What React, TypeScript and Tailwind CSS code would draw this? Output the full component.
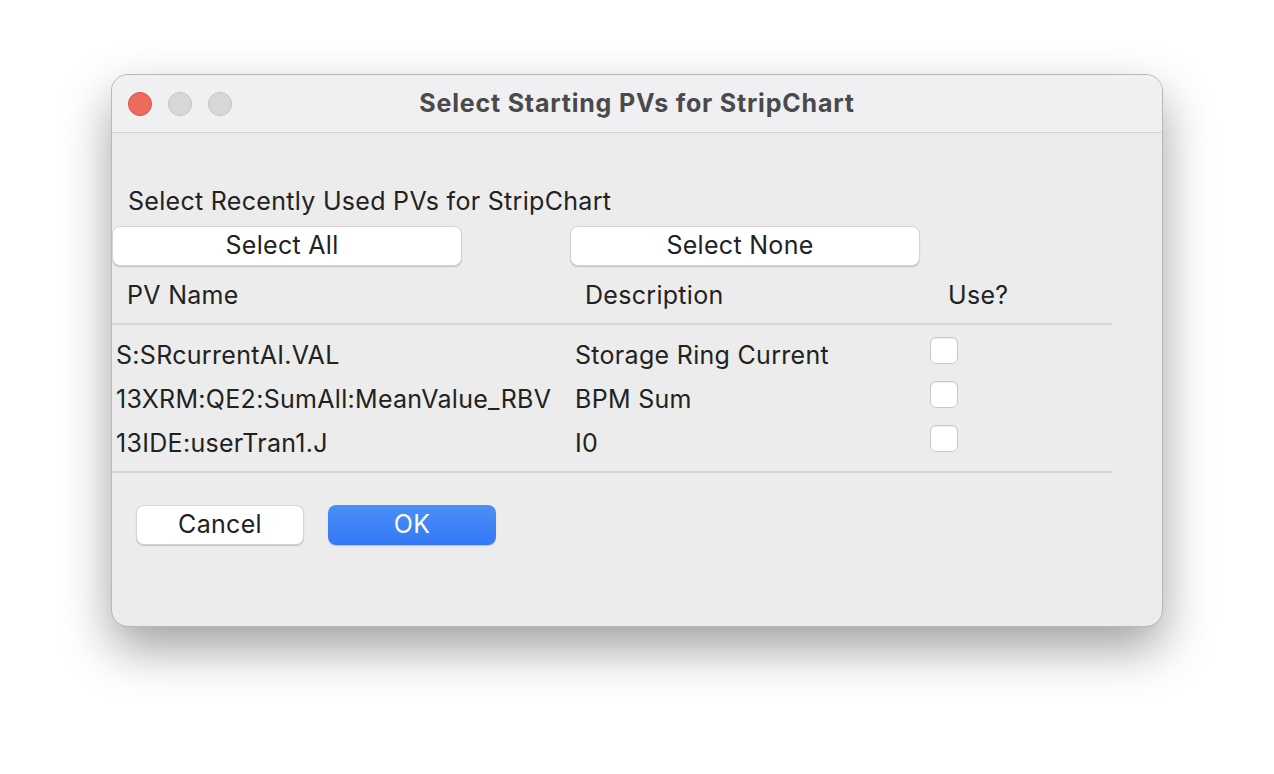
import React from "react";

const rows = [
  { name: "S:SRcurrentAI.VAL", desc: "Storage Ring Current" },
  { name: "13XRM:QE2:SumAll:MeanValue_RBV", desc: "BPM Sum" },
  { name: "13IDE:userTran1.J", desc: "I0" },
];

function Light({ color, border }: { color: string; border: string }) {
  return <div className={`w-[24px] h-[24px] rounded-full border ${color} ${border}`} />;
}

export default function App() {
  return (
    <div
      className="min-h-screen bg-white pt-[75px] pl-[112px] text-[#222222]"
      style={{ fontFamily: "Inter, 'Liberation Sans', sans-serif" }}
    >
      <div className="w-[1050px] h-[551px] rounded-[16px] outline-1 outline-[#b8b8b8] bg-[#ececec] overflow-hidden shadow-[0_22px_50px_rgba(0,0,0,0.38)] flex flex-col">
        {/* title bar */}
        <div className="relative h-[58px] shrink-0 bg-[#f0f0f2] border-b border-[#d2d2d2] flex items-center justify-center">
          <div className="absolute left-[16px] top-[17px] flex gap-[16px]">
            <Light color="bg-[#ed6a5e]" border="border-[#d25146]" />
            <Light color="bg-[#d8d8d8]" border="border-[#c2c2c2]" />
            <Light color="bg-[#d8d8d8]" border="border-[#c2c2c2]" />
          </div>
          <span className="text-[25px] font-bold tracking-[0.8px] text-[#4a4a4a]">Select Starting PVs for StripChart</span>
        </div>

        {/* body */}
        <div className="flex flex-col pt-[53px] text-[25px] tracking-[0.3px]">
          <div className="h-[30px] pl-[16px] pt-[1px] flex items-center">Select Recently Used PVs for StripChart</div>

          <div className="mt-[10px] flex gap-[108px]">
            <button className="w-[350px] h-[40px] pr-[10px] rounded-[8px] bg-white border border-[#d4d4d4] shadow-[0_1px_1px_rgba(0,0,0,0.18)]">
              Select All
            </button>
            <button className="w-[350px] h-[40px] pr-[10px] rounded-[8px] bg-white border border-[#d4d4d4] shadow-[0_1px_1px_rgba(0,0,0,0.18)]">
              Select None
            </button>
          </div>

          <div className="h-[57px] pl-[15px] pt-[3px] flex items-center">
            <div className="w-[458px]">PV Name</div>
            <div className="w-[363px]">Description</div>
            <div>Use?</div>
          </div>

          <div className="w-[1000px] h-[2px] bg-[#d6d6d6]" />

          <div className="pt-[9px] pb-[5px] flex flex-col">
            {rows.map((r) => (
              <div key={r.name} className="h-[44px] pl-[4px] flex items-center">
                <div className="w-[459px]">{r.name}</div>
                <div className="w-[355px]">{r.desc}</div>
                <div className="w-[28px] h-[27px] -mt-[11px] rounded-[6px] bg-white border border-[#c8c8c8] shadow-[inset_0_1px_1px_rgba(0,0,0,0.08)]" />
              </div>
            ))}
          </div>

          <div className="w-[1000px] h-[2px] bg-[#d6d6d6]" />

          <div className="mt-[32px] pl-[24px] flex gap-[24px]">
            <button className="w-[168px] h-[40px] rounded-[8px] bg-white border border-[#d4d4d4] shadow-[0_1px_1px_rgba(0,0,0,0.18)]">
              Cancel
            </button>
            <button className="w-[168px] h-[40px] rounded-[8px] bg-gradient-to-b from-[#4b8ff8] to-[#3478f6] text-white shadow-[0_1px_1px_rgba(0,0,0,0.18)]">
              OK
            </button>
          </div>
        </div>
      </div>
    </div>
  );
}
